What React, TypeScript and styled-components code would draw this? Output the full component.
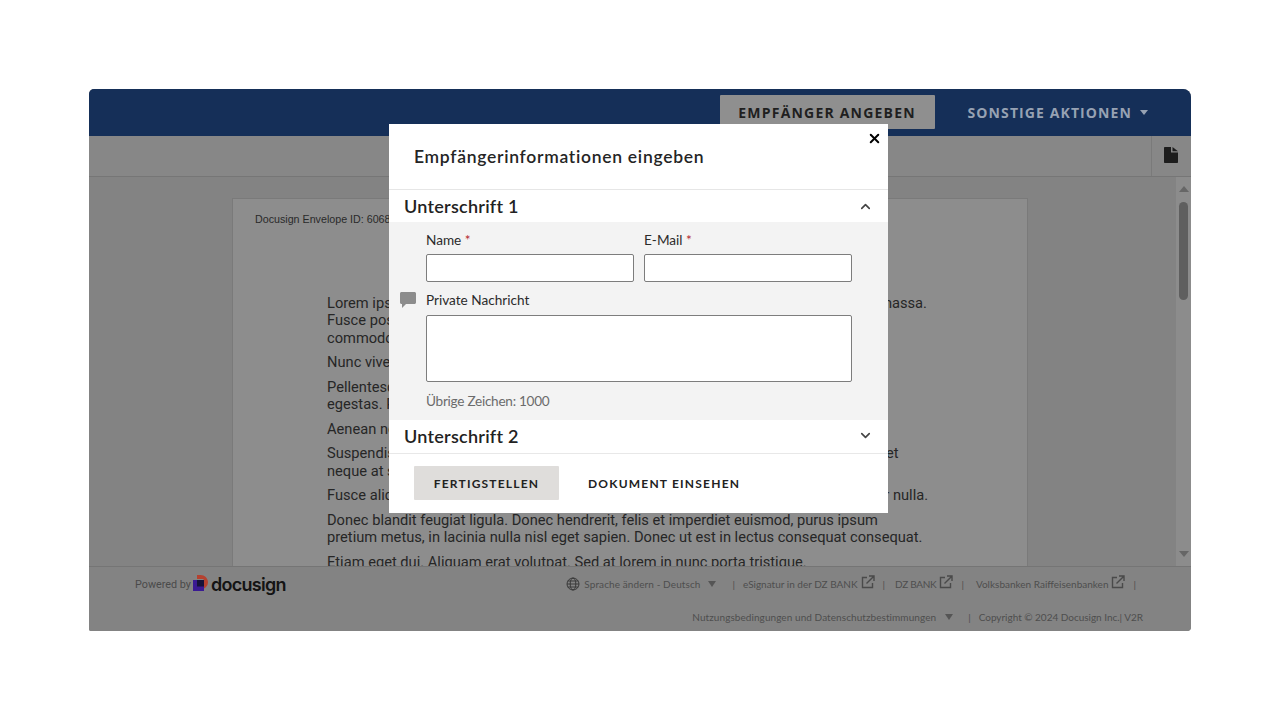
import React from "react";
import styled, { createGlobalStyle } from "styled-components";
import { ChevronUp, ChevronDown, X } from "lucide-react";

const Global = createGlobalStyle`
  html, body { margin: 0; padding: 0; background: #fff; }
  #root { width: 1280px; height: 720px; overflow: hidden; }
  * { box-sizing: border-box; }
`;

const Page = styled.div`
  width: 1280px;
  height: 720px;
  padding: 89px 89px 0;
  background: #fff;
`;
const Card = styled.div`
  position: relative;
  width: 1102px;
  height: 542px;
  display: flex;
  flex-direction: column;
  border-radius: 5px 8px 4px 2px;
  overflow: hidden;
  background: #808080;
`;
const Header = styled.header`
  flex: 0 0 47px;
  display: flex;
  align-items: center;
  justify-content: flex-end;
  padding: 0 43px 1px 0;
  background: #152f58;
  font-family: "Open Sans", sans-serif;
  font-size: 14px;
  font-weight: 700;
`;
const HeaderButton = styled.div`
  width: 215px;
  height: 34px;
  margin-right: 33px;
  display: flex;
  align-items: center;
  justify-content: center;
  background: #8f8f8f;
  border-radius: 1px;
  color: #1f1f1f;
  letter-spacing: 1.2px;
`;
const HeaderMenu = styled.div`
  display: flex;
  align-items: center;
  gap: 8px;
  color: #97a2b3;
  letter-spacing: 1.1px;
`;
const Caret = styled.span<{ $c: string; $w: number; $ml?: number }>`
  display: inline-block;
  width: 0;
  height: 0;
  margin-left: ${(p) => p.$ml ?? 0}px;
  border-left: ${(p) => p.$w / 2}px solid transparent;
  border-right: ${(p) => p.$w / 2}px solid transparent;
  border-top: ${(p) => Math.round(p.$w * 0.62)}px solid ${(p) => p.$c};
`;
const Toolbar = styled.div`
  flex: 0 0 41px;
  display: flex;
  justify-content: flex-end;
  background: #878787;
  border-bottom: 1px solid #767676;
`;
const ToolCell = styled.div`
  width: 40px;
  display: flex;
  align-items: center;
  justify-content: center;
  padding-right: 1px;
  padding-bottom: 2px;
  border-left: 1px solid #7a7a7a;
`;
const Main = styled.div`
  flex: 1;
  min-height: 0;
  display: flex;
`;
const DocArea = styled.div`
  flex: 1;
  overflow: hidden;
  padding: 21px 0 0 143px;
  background: #838383;
`;
const DocPage = styled.div`
  width: 796px;
  height: 800px;
  padding: 14px 93px 0 94px;
  background: #8d8d8d;
  border: 1px solid #7a7a7a;
  color: #262626;
`;
const EnvelopeId = styled.div`
  margin-left: -72px;
  margin-bottom: 68.5px;
  font-family: "Liberation Sans", sans-serif;
  font-size: 10.7px;
  line-height: 13px;
  color: #2a2a2a;
  white-space: nowrap;
`;
const Para = styled.p`
  margin: 0 0 7px;
  width: 602px;
  font-family: Roboto, sans-serif;
  font-size: 14.67px;
  line-height: 17.5px;
`;
const Scrollbar = styled.div`
  flex: 0 0 15px;
  display: flex;
  flex-direction: column;
  align-items: center;
  padding-top: 9px;
  background: #8c8c8c;
`;
const ArrowUp = styled.span`
  width: 0;
  height: 0;
  border-left: 5px solid transparent;
  border-right: 5px solid transparent;
  border-bottom: 6px solid #666;
`;
const ArrowDown = styled(ArrowUp)`
  border-bottom: 0;
  border-top: 6px solid #666;
  margin-top: auto;
  margin-bottom: 9px;
`;
const Thumb = styled.div`
  width: 9px;
  height: 98px;
  margin-top: 10px;
  border-radius: 5px;
  background: #5f5f5f;
`;
const Footer = styled.footer`
  flex: 0 0 64px;
  display: flex;
  flex-direction: column;
  padding: 0 48px 0 46px;
  background: #838383;
  border-top: 1px solid #757575;
  font-family: Lato, sans-serif;
  font-size: 10px;
  color: #4e4e4e;
`;
const FooterTop = styled.div`
  height: 34px;
  display: flex;
  align-items: center;
  justify-content: space-between;
`;
const FooterBottom = styled.div`
  height: 30px;
  display: flex;
  align-items: center;
  justify-content: flex-end;
  padding-top: 1px;
`;
const Powered = styled.div`
  display: flex;
  align-items: center;
  font-family: Roboto, sans-serif;
  font-size: 10.8px;
  color: #4a4a4a;
`;
const LogoWord = styled.span`
  margin-left: 3px;
  font-family: Inter, sans-serif;
  font-size: 18px;
  font-weight: 600;
  letter-spacing: -0.7px;
  color: #141414;
`;
const LinkRow = styled.div`
  display: flex;
  align-items: center;
`;
const FootText = styled.span<{ $ls: number }>`
  letter-spacing: ${(p) => p.$ls}px;
`;
const Sep = styled.span<{ $l: number; $r: number }>`
  margin: 0 ${(p) => p.$r}px 0 ${(p) => p.$l}px;
`;
const Modal = styled.div`
  position: absolute;
  left: 300px;
  top: 35px;
  width: 499px;
  height: 389px;
  display: flex;
  flex-direction: column;
  background: #fff;
  color: #222;
  font-family: Lato, sans-serif;
`;
const CloseBtn = styled.div`
  position: absolute;
  top: 7px;
  right: 6px;
  display: flex;
  color: #000;
`;
const Title = styled.h2`
  flex: 0 0 66px;
  margin: 0;
  padding: 0 0 0 25px;
  display: flex;
  align-items: center;
  border-bottom: 1px solid #e6e6e6;
  font-size: 17.5px;
  font-weight: 600;
  letter-spacing: 0.72px;
  color: #252525;
`;
const SectionHead = styled.div<{ $line?: boolean }>`
  flex: 0 0 ${(p) => (p.$line ? 34 : 32)}px;
  display: flex;
  align-items: center;
  justify-content: space-between;
  padding: 0 15px ${(p) => (p.$line ? 2 : 0)}px;
  font-size: 18px;
  font-weight: 600;
  letter-spacing: 0.25px;
  color: #222;
  border-bottom: ${(p) => (p.$line ? "1px solid #e8e8e8" : "0")};
`;
const SectionBody = styled.div`
  flex: 0 0 198px;
  display: grid;
  grid-template-columns: 26px 208px 208px;
  padding: 10px 0 0 11px;
  background: #f3f3f3;
  align-content: start;
`;
const Fields = styled.div`
  grid-column: 2 / 4;
  display: grid;
  grid-template-columns: 208px 208px;
  column-gap: 10px;
`;
const Label = styled.label`
  display: block;
  height: 22px;
  font-size: 13.6px;
  line-height: 16px;
  color: #2b2b2b;
`;
const Req = styled.span`
  color: #b3262e;
`;
const Input = styled.div`
  height: 28px;
  background: #fff;
  border: 1px solid #7d7d7d;
  border-radius: 2px;
`;
const NoteIcon = styled.div`
  grid-column: 1;
  margin-top: 10px;
  height: 16px;
`;
const NoteBlock = styled.div`
  grid-column: 2 / 4;
  width: 426px;
  margin-top: 10px;
`;
const TextArea = styled.div`
  height: 67px;
  margin-top: 1px;
  background: #fff;
  border: 1px solid #7d7d7d;
  border-radius: 2px;
`;
const Counter = styled.div`
  margin-top: 11px;
  font-size: 13.6px;
  line-height: 17px;
  letter-spacing: -0.27px;
  color: #6b6b6b;
`;
const Actions = styled.div`
  flex: 1;
  display: flex;
  align-items: center;
  padding: 0 0 1px 25px;
  gap: 29px;
  font-size: 12px;
  font-weight: 700;
  letter-spacing: 1.2px;
  color: #222;
`;
const Primary = styled.div`
  width: 145px;
  height: 34px;
  display: flex;
  align-items: center;
  justify-content: center;
  background: #dfdddb;
  border-radius: 1px;
`;
const Ghost = styled.div``;
const ExternalIcon = styled.svg`
  margin-left: 3px;
  margin-top: -5px;
`;
const GlobeIcon = styled.svg`
  margin-right: 4px;
`;
const LogoMark = styled.svg`
  margin-left: 2px;
`;

const External = () => (
  <ExternalIcon width="14" height="14" viewBox="0 0 14 14" fill="none" stroke="#4a4a4a" strokeWidth="1.4">
    <path d="M6 2.5H1.5V12.5H11.5V8" />
    <path d="M5.5 8.5L12.8 1.2M8 1H13V6" />
  </ExternalIcon>
);

export default function App() {
  return (
    <Page>
      <Global />
      <Card>
        <Header>
          <HeaderButton>EMPFÄNGER ANGEBEN</HeaderButton>
          <HeaderMenu>
            SONSTIGE AKTIONEN <Caret $c="#97a2b3" $w={8} />
          </HeaderMenu>
        </Header>
        <Toolbar>
          <ToolCell>
            <svg width="14" height="16" viewBox="0 0 14 16" fill="#1d1d1d">
              <path d="M0 1C0 .4.4 0 1 0H7V5.5H14V15C14 15.6 13.6 16 13 16H1C.4 16 0 15.6 0 15Z" />
              <path d="M8.5 0L14 4.2H8.5Z" />
            </svg>
          </ToolCell>
        </Toolbar>
        <Main>
          <DocArea>
            <DocPage>
              <EnvelopeId>Docusign Envelope ID: 6068A2F1-7C3E-4B1D-9A55-2E8F0C7D1B34</EnvelopeId>
              <Para>Lorem ipsum dolor sit amet, consectetuer adipiscing elit. Maecenas porttitor congue massa. Fusce posuere, magna sed pulvinar ultricies, purus lectus malesuada libero, sit amet commodo magna eros quis urna.</Para>
              <Para>Nunc viverra imperdiet enim. Fusce est. Vivamus a tellus.</Para>
              <Para>Pellentesque habitant morbi tristique senectus et netus et malesuada fames ac turpis egestas. Proin pharetra nonummy pede. Mauris et orci.</Para>
              <Para>Aenean nec lorem. In porttitor. Donec laoreet nonummy augue.</Para>
              <Para>Suspendisse dui purus, scelerisque at, vulputate vitae, pretium mattis, nunc. Mauris eget neque at sem venenatis eleifend. Ut nonummy.</Para>
              <Para>Fusce aliquet pede non pede. Suspendisse dapibus lorem pellentesque magna. Integer nulla.</Para>
              <Para>Donec blandit feugiat ligula. Donec hendrerit, felis et imperdiet euismod, purus ipsum pretium metus, in lacinia nulla nisl eget sapien. Donec ut est in lectus consequat consequat.</Para>
              <Para>Etiam eget dui. Aliquam erat volutpat. Sed at lorem in nunc porta tristique.</Para>
            </DocPage>
          </DocArea>
          <Scrollbar>
            <ArrowUp />
            <Thumb />
            <ArrowDown />
          </Scrollbar>
        </Main>
        <Footer>
          <FooterTop>
            <Powered>
              Powered by
              <LogoMark width="15" height="18" viewBox="0 0 15 18">
                <path d="M4 0H7.5C11.6 0 15 3.2 15 7.2C15 10.2 13 12.8 10.5 13.8V4H4Z" fill="#b5412f" />
                <rect x="0" y="5" width="11" height="11" fill="#3a1a93" />
                <rect x="4" y="5" width="7" height="6.5" fill="#17133a" />
              </LogoMark>
              <LogoWord>docusign</LogoWord>
            </Powered>
            <LinkRow>
              <GlobeIcon width="14" height="14" viewBox="0 0 14 14" fill="none" stroke="#333" strokeWidth="0.9">
                <circle cx="7" cy="7" r="6" />
                <ellipse cx="7" cy="7" rx="2.8" ry="6" />
                <path d="M1 7H13M1.8 4H12.2M1.8 10H12.2" />
              </GlobeIcon>
              <FootText $ls={0.1}>Sprache ändern - Deutsch</FootText>
              <Caret $c="#555" $w={9} $ml={8} />
              <Sep $l={16} $r={8}>|</Sep>
              eSignatur in der DZ BANK
              <External />
              <Sep $l={8} $r={10}>|</Sep>
              <FootText $ls={-0.3}>DZ BANK</FootText>
              <External />
              <Sep $l={8} $r={12}>|</Sep>
              Volksbanken Raiffeisenbanken
              <External />
              <Sep $l={8} $r={7}>|</Sep>
            </LinkRow>
          </FooterTop>
          <FooterBottom>
            <FootText $ls={0.07}>Nutzungsbedingungen und Datenschutzbestimmungen</FootText>
            <Caret $c="#555" $w={9} $ml={9} />
            <Sep $l={15} $r={8}>|</Sep>
            <FootText $ls={-0.02}>Copyright © 2024 Docusign Inc.| V2R</FootText>
          </FooterBottom>
        </Footer>
        <Modal>
          <CloseBtn>
            <X size={15} strokeWidth={3.2} />
          </CloseBtn>
          <Title>Empfängerinformationen eingeben</Title>
          <SectionHead>
            Unterschrift 1
            <ChevronUp size={15} strokeWidth={2.6} color="#444" />
          </SectionHead>
          <SectionBody>
            <Fields>
              <div>
                <Label>
                  Name <Req>*</Req>
                </Label>
                <Input />
              </div>
              <div>
                <Label>
                  E-Mail <Req>*</Req>
                </Label>
                <Input />
              </div>
            </Fields>
            <NoteIcon>
              <svg width="16" height="16" viewBox="0 0 16 16" fill="#8c8c8c">
                <path d="M1.5 0H14.5C15.3 0 16 .7 16 1.5V10.5C16 11.3 15.3 12 14.5 12H6L2 16V12H1.5C.7 12 0 11.3 0 10.5V1.5C0 .7.7 0 1.5 0Z" />
              </svg>
            </NoteIcon>
            <NoteBlock>
              <Label>Private Nachricht</Label>
              <TextArea />
              <Counter>Übrige Zeichen: 1000</Counter>
            </NoteBlock>
          </SectionBody>
          <SectionHead $line>
            Unterschrift 2
            <ChevronDown size={15} strokeWidth={2.6} color="#444" />
          </SectionHead>
          <Actions>
            <Primary>FERTIGSTELLEN</Primary>
            <Ghost>DOKUMENT EINSEHEN</Ghost>
          </Actions>
        </Modal>
      </Card>
    </Page>
  );
}
